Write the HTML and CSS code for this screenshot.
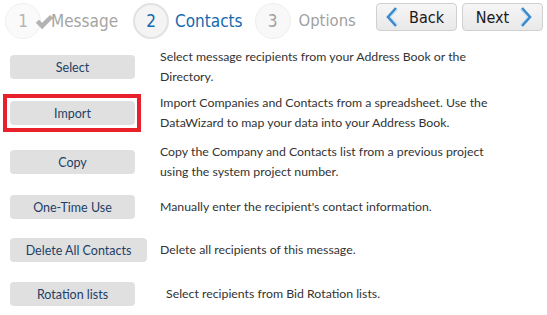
FILE: index.html
```html
<!DOCTYPE html>
<html>
<head>
<meta charset="utf-8">
<link rel="stylesheet" href="styles.css">
</head>
<body>
<div class="page">
  <div class="header">
    <div class="steps">
      <div class="step done">
        <span class="circle">1</span>
        <svg class="check" width="19" height="16" viewBox="0 0 24 20"><path d="M1 11 L5 7 L9 11 L19 1 L23 5 L9 19 Z" fill="#b3b3b3"/></svg>
        <span class="label">Message</span>
      </div>
      <div class="step current">
        <span class="circle">2</span>
        <span class="label">Contacts</span>
      </div>
      <div class="step todo">
        <span class="circle">3</span>
        <span class="label">Options</span>
      </div>
    </div>
    <div class="nav">
      <button class="navbtn back"><svg width="14" height="20" viewBox="0 0 14 20"><path d="M11 1 L3 10 L11 19" fill="none" stroke="#3a8ad0" stroke-width="2.6"/><path d="M12.5 2.5 L5.5 10 L12.5 17.5" fill="none" stroke="#b4dbf5" stroke-width="1"/></svg><span>Back</span></button>
      <button class="navbtn next"><span>Next</span><svg width="14" height="20" viewBox="0 0 14 20"><path d="M3 1 L11 10 L3 19" fill="none" stroke="#3a8ad0" stroke-width="2.6"/><path d="M1.5 2.5 L8.5 10 L1.5 17.5" fill="none" stroke="#b4dbf5" stroke-width="1"/></svg></button>
    </div>
  </div>
  <div class="rows">
    <div class="row r1">
      <div class="btncell"><button class="act">Select</button></div>
      <p class="desc">Select message recipients from your Address Book or the Directory.</p>
    </div>
    <div class="row r2">
      <div class="btncell highlighted"><button class="act">Import</button></div>
      <p class="desc">Import Companies and Contacts from a spreadsheet. Use the DataWizard to map your data into your Address Book.</p>
    </div>
    <div class="row r3">
      <div class="btncell"><button class="act">Copy</button></div>
      <p class="desc">Copy the Company and Contacts list from a previous project using the system project number.</p>
    </div>
    <div class="row r4">
      <div class="btncell"><button class="act">One-Time Use</button></div>
      <p class="desc">Manually enter the recipient's contact information.</p>
    </div>
    <div class="row r5">
      <div class="btncell"><button class="act wide">Delete All Contacts</button></div>
      <p class="desc">Delete all recipients of this message.</p>
    </div>
    <div class="row r6">
      <div class="btncell"><button class="act">Rotation lists</button></div>
      <p class="desc indent">Select recipients from Bid Rotation lists.</p>
    </div>
  </div>
</div>
</body>
</html>
```
FILE: styles.css
```css
html, body { margin: 0; padding: 0; background: #fff; }
.page { width: 547px; height: 315px; overflow: hidden; }
.header { display: flex; align-items: flex-start; padding: 2px 4px 0 5px; height: 42px; box-sizing: border-box; }
.steps { display: flex; align-items: center; height: 37px; }
.step { display: flex; align-items: center; }
.circle {
  width: 34px; height: 34px; border-radius: 50%;
  border: 1px solid #ececec; background: #f7f7f7;
  display: flex; align-items: center; justify-content: center;
  font-family: "DejaVu Sans", sans-serif; font-stretch: condensed; font-size: 17px;
}
.label { font-family: "DejaVu Sans", sans-serif; font-stretch: condensed; font-size: 17px; }
.done .circle { color: #b5b5b5; background: #fafafa; border-color: #f0f0f0; }
.done .check { margin-left: -6px; margin-top: 2px; }
.done .label { color: #a5a5a5; margin-left: -3px; }
.current { margin-left: 15px; }
.current .circle { color: #1669ae; border: 2px solid #e2e2e2; background: #f4f4f4; width: 32px; height: 32px; }
.current .label { color: #1669ae; margin-left: 6px; }
.todo { margin-left: 12px; }
.todo .circle { color: #a0a0a0; background: #f8f8f8; border-color: #eeeeee; }
.todo .label { color: #a0a0a0; margin-left: 8px; font-size: 16.5px; }
.nav { margin-left: auto; margin-top: 1px; display: flex; gap: 5px; }
.navbtn {
  width: 81px; height: 28px; box-sizing: border-box;
  border: 1px solid #d0d0d0; border-radius: 4px;
  background: linear-gradient(#f6f6f6, #e9e9e9);
  font-family: "DejaVu Sans", sans-serif; font-stretch: condensed; font-size: 16px; color: #1a1a1a;
  display: flex; align-items: center; justify-content: center; gap: 10px; padding: 0;
}
.back { padding-right: 4px; }
.next { padding-left: 4px; }
.rows { padding-left: 10px; }
.row { display: flex; align-items: center; height: 40px; }
.btncell { width: 150px; flex: none; }
.act {
  display: block;
  width: 125px; height: 24px; border: none; border-radius: 4px;
  background: #e0e0e0; color: #1d3f66;
  font-family: "Lato", sans-serif; font-size: 12.5px; padding: 0;
}
.act.wide { width: 137px; }
.highlighted { position: relative; }
.highlighted::before {
  content: ""; position: absolute; left: -7px; top: -7px; width: 130px; height: 30px;
  border: 4px solid #e8202a;
}
.desc {
  margin: 0; width: 345px;
  font-family: "Lato", sans-serif; font-size: 12.3px; line-height: 20px; color: #333;
}
.desc.indent { padding-left: 6px; }
.r1 { margin-top: 5px; }
.r2 { margin-top: 6px; }
.r3 { margin-top: 9px; }
.r4 { margin-top: 5px; }
.r5 { margin-top: 3px; }
.r6 { margin-top: 4px; }
```
